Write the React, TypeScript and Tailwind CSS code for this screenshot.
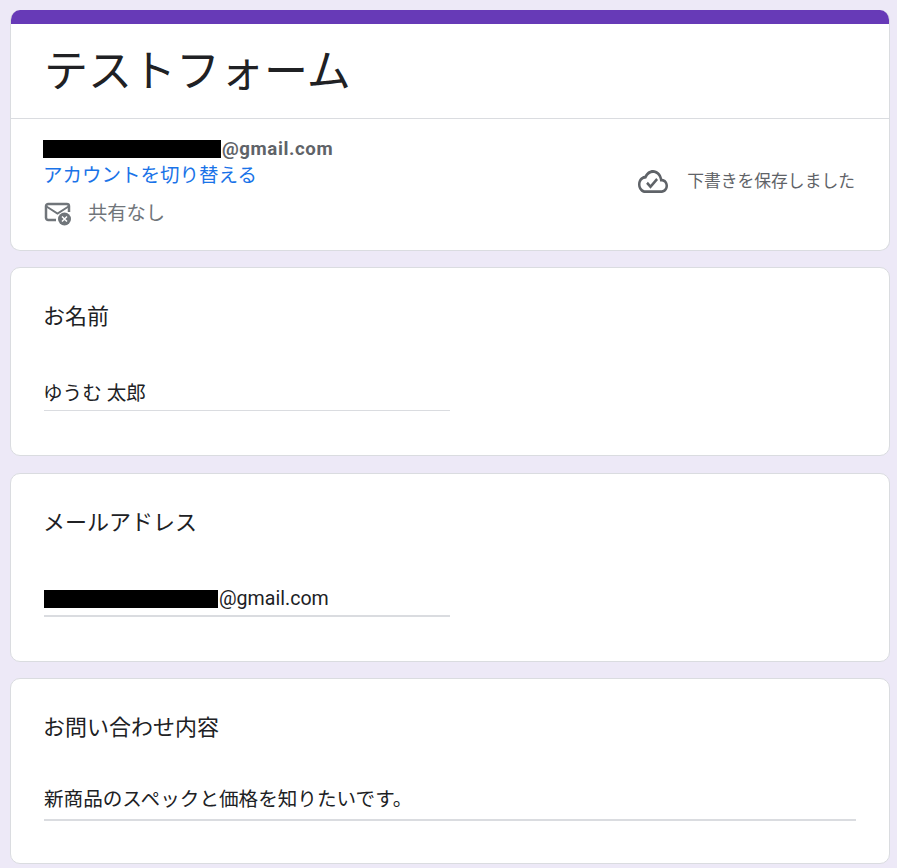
const FONT = "[font-family:Roboto,'Noto_Sans_CJK_JP',sans-serif]";

function Redacted({ width }: { width: string }) {
  return <span className={`inline-block h-[18px] bg-black ${width}`} />;
}

function MailOffIcon() {
  return (
    <svg width="28" height="24" viewBox="0 0 28 24" fill="none">
      <path d="M12 18H4.2C3 18 2 17 2 15.8V4.2C2 3 3 2 4.2 2h18.6C24 2 25 3 25 4.2V10" stroke="#70757a" strokeWidth="2.500" />
      <path d="M2.500 4.500 13.500 11.500 24.500 4.500" stroke="#70757a" strokeWidth="2" />
      <circle cx="20.500" cy="17" r="6.500" fill="#70757a" />
      <path d="M18 14.500l5 5M23 14.500l-5 5" stroke="#fff" strokeWidth="1.500" />
    </svg>
  );
}

function CloudDoneIcon() {
  return (
    <svg width="30" height="23" viewBox="0 4 24 16" preserveAspectRatio="none" fill="#5f6368">
      <path d="M19.35 10.04C18.67 6.59 15.64 4 12 4 9.11 4 6.6 5.64 5.35 8.04 2.34 8.36 0 10.91 0 14c0 3.31 2.69 6 6 6h13c2.76 0 5-2.24 5-5 0-2.64-2.05-4.78-4.65-4.96zM19 18H6c-2.21 0-4-1.79-4-4 0-2.05 1.53-3.76 3.56-3.97l1.07-.11.5-.95C8.08 7.14 9.94 6 12 6c2.62 0 4.88 1.86 5.39 4.43l.3 1.5 1.53.11c1.56.1 2.78 1.41 2.78 2.96 0 1.65-1.35 3-3 3zm-9-3.82l-2.09-2.09L6.5 13.5 10 17l6.01-6.01-1.41-1.41z" />
    </svg>
  );
}

function Question({
  label,
  heightClass,
  answerClass,
  lineClass,
  children,
}: {
  label: string;
  heightClass: string;
  answerClass: string;
  lineClass: string;
  children: React.ReactNode;
}) {
  return (
    <section className={`flex flex-col rounded-[10px] border border-[#dadce0] bg-white px-[33px] pt-[34px] ${heightClass}`}>
      <h2 className="-ml-px text-[22px] leading-[30px] font-normal text-[#202124]">{label}</h2>
      <div className={`flex h-[28px] items-center text-[19.6px] leading-[28px] text-[#202124] ${answerClass}`}>{children}</div>
      <div className={lineClass} />
    </section>
  );
}

export default function App() {
  return (
    <div className={`${FONT} h-[868px] overflow-hidden bg-[#ede9f7] pt-[10px] pr-[7px] pl-[10px]`}>
      <div className="flex flex-col gap-[16px]">
        <header className="h-[241px] overflow-hidden rounded-[10px] border border-t-0 border-[#dadce0] bg-white">
          <div className="-mx-px h-[14px] bg-[#673ab7]" />
          <div className="flex h-[95px] items-center border-b border-[#dadce0] pt-[2px] pl-[33px]">
            <h1 className="text-[44px] leading-[60px] font-normal text-[#202124]">テストフォーム</h1>
          </div>
          <div className="flex items-center justify-between pt-[20px] pr-[34px] pl-[32px]">
            <div className="flex flex-col">
              <div className="flex h-[20px] items-center text-[18.67px] font-bold tracking-[0.6px] text-[#5f6368]">
                <Redacted width="w-[178px]" />
                <span className="ml-px">@gmail.com</span>
              </div>
              <a className="mt-[3px] text-[19.5px] leading-[28px] text-[#1a73e8]">アカウントを切り替える</a>
              <div className="mt-[10px] ml-px flex h-[28px] items-center gap-[16px] text-[19.3px] text-[#70757a]">
                <MailOffIcon />
                <span>共有なし</span>
              </div>
            </div>
            <div className="-mt-[4px] flex items-center gap-[19px] text-[16.8px] text-[#5f6368]">
              <CloudDoneIcon />
              <span>下書きを保存しました</span>
            </div>
          </div>
        </header>

        <div className="pb-px">
          <Question label="お名前" heightClass="h-[189px]" answerClass="mt-[48px] -ml-px" lineClass="mt-[2px] h-px w-[406px] bg-[#dadce0]">
            ゆうむ 太郎
          </Question>
        </div>

        <Question label="メールアドレス" heightClass="h-[189px]" answerClass="mt-[47px]" lineClass="mt-[2px] h-[2px] w-[406px] bg-[#dadce0]">
          <Redacted width="w-[174px]" />
          <span className="ml-px">@gmail.com</span>
        </Question>

        <Question label="お問い合わせ内容" heightClass="h-[186px]" answerClass="mt-[43px]" lineClass="mt-[5px] h-[2px] w-[812px] bg-[#dadce0]">
          新商品のスペックと価格を知りたいです。
        </Question>
      </div>
    </div>
  );
}
